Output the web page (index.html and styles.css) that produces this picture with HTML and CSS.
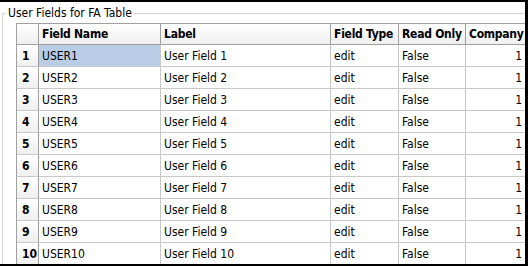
FILE: index.html
```html
<!DOCTYPE html>
<html>
<head>
<meta charset="utf-8">
<link rel="stylesheet" href="styles.css">
</head>
<body>
<div class="frame">
  <div class="group">
    <span class="group-title">User Fields for FA Table</span>
    <div class="grid-wrap">
      <table class="grid">
        <colgroup>
          <col class="c-rh"><col class="c-name"><col class="c-label"><col class="c-type"><col class="c-ro"><col class="c-co">
        </colgroup>
        <thead>
          <tr>
            <th class="rh"></th>
            <th>Field Name</th>
            <th>Label</th>
            <th>Field Type</th>
            <th>Read Only</th>
            <th>Company</th>
          </tr>
        </thead>
        <tbody>
          <tr><th class="rh">1</th><td class="sel">USER1</td><td>User Field 1</td><td>edit</td><td>False</td><td class="num">1</td></tr>
          <tr><th class="rh">2</th><td>USER2</td><td>User Field 2</td><td>edit</td><td>False</td><td class="num">1</td></tr>
          <tr><th class="rh">3</th><td>USER3</td><td>User Field 3</td><td>edit</td><td>False</td><td class="num">1</td></tr>
          <tr><th class="rh">4</th><td>USER4</td><td>User Field 4</td><td>edit</td><td>False</td><td class="num">1</td></tr>
          <tr><th class="rh">5</th><td>USER5</td><td>User Field 5</td><td>edit</td><td>False</td><td class="num">1</td></tr>
          <tr><th class="rh">6</th><td>USER6</td><td>User Field 6</td><td>edit</td><td>False</td><td class="num">1</td></tr>
          <tr><th class="rh">7</th><td>USER7</td><td>User Field 7</td><td>edit</td><td>False</td><td class="num">1</td></tr>
          <tr><th class="rh">8</th><td>USER8</td><td>User Field 8</td><td>edit</td><td>False</td><td class="num">1</td></tr>
          <tr><th class="rh">9</th><td>USER9</td><td>User Field 9</td><td>edit</td><td>False</td><td class="num">1</td></tr>
          <tr><th class="rh">10</th><td>USER10</td><td>User Field 10</td><td>edit</td><td>False</td><td class="num">1</td></tr>
        </tbody>
      </table>
    </div>
  </div>
</div>
</body>
</html>
```
FILE: styles.css
```css
html, body {
  margin: 0;
  padding: 0;
  background: #000;
}
.frame {
  width: 525px;
  height: 262px;
  margin-top: 2px;
  background: #fff;
  overflow: hidden;
  font-family: "DejaVu Sans Condensed", "DejaVu Sans", sans-serif;
  font-stretch: condensed;
  font-size: 12px;
  color: #000;
}
.group {
  position: relative;
  margin: 11px 0 0 2px;
  padding: 9px 0 0 13px;
  border-top: 1px solid #d5d5d5;
  border-left: 1px solid #d5d5d5;
  height: 260px;
}
.group-title {
  position: absolute;
  top: -8px;
  left: 3px;
  padding: 0 2px 0 2px;
  background: #fff;
  font-size: 12px;
  line-height: 15px;
  color: #000;
}
.grid-wrap {
  width: 700px;
}
.grid {
  border-collapse: separate;
  border-spacing: 0;
  table-layout: fixed;
  width: 510px;
  border-left: 1px solid #a0a0a0;
  border-top: 1px solid #a0a0a0;
}
.c-rh { width: 22px; }
.c-name { width: 122px; }
.c-label { width: 170px; }
.c-type { width: 68px; }
.c-ro { width: 67px; }
.c-co { width: 60px; }
.grid th, .grid td {
  box-sizing: border-box;
  height: 22px;
  padding: 0 3px;
  text-align: left;
  white-space: nowrap;
  overflow: hidden;
}
.grid thead th {
  height: 21px;
  font-weight: bold;
  letter-spacing: -0.25px;
  background: linear-gradient(#ffffff, #efefef);
  border-right: 1px solid #a0a0a0;
  border-bottom: 1px solid #a0a0a0;
}
.grid tbody td {
  border-right: 1px solid #c8c8c8;
  border-bottom: 1px solid #c8c8c8;
}
.grid tbody th.rh {
  font-weight: bold;
  padding: 0 0 0 5px;
  background: linear-gradient(#ffffff, #efefef);
  border-right: 1px solid #a0a0a0;
  border-bottom: 1px solid #c8c8c8;
}
.grid td.sel { background: #b8cce6; }
.grid td.num { text-align: right; padding-right: 3px; }
```
